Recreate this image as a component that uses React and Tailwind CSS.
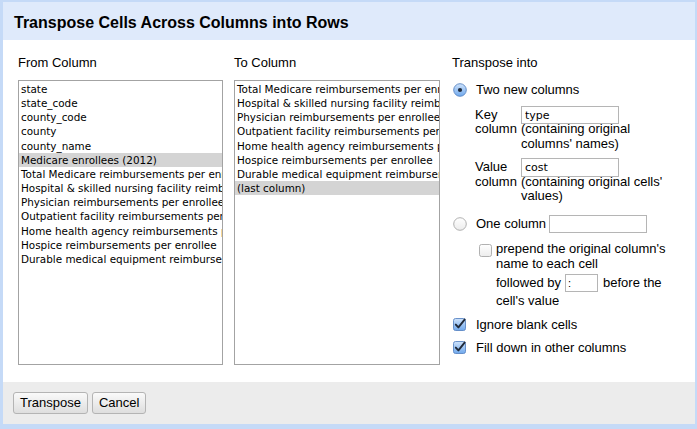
import React from "react";

const fromColumns = [
  "state",
  "state_code",
  "county_code",
  "county",
  "county_name",
  "Medicare enrollees (2012)",
  "Total Medicare reimbursements per enrollee",
  "Hospital & skilled nursing facility reimbursements",
  "Physician reimbursements per enrollee",
  "Outpatient facility reimbursements per enrollee",
  "Home health agency reimbursements per enrollee",
  "Hospice reimbursements per enrollee",
  "Durable medical equipment reimbursements",
];

const toColumns = [
  "Total Medicare reimbursements per enrollee",
  "Hospital & skilled nursing facility reimbursements",
  "Physician reimbursements per enrollee",
  "Outpatient facility reimbursements per enrollee",
  "Home health agency reimbursements per enrollee",
  "Hospice reimbursements per enrollee",
  "Durable medical equipment reimbursements",
  "(last column)",
];

const Radio = ({ checked }) => (
  <svg width="14" height="14" viewBox="0 0 14 14" className="shrink-0">
    <defs>
      <linearGradient id="rOn" x1="0" y1="0" x2="0" y2="1">
        <stop offset="0" stopColor="#cfe3fb" />
        <stop offset="1" stopColor="#6fa8ec" />
      </linearGradient>
      <linearGradient id="rOff" x1="0" y1="0" x2="0" y2="1">
        <stop offset="0" stopColor="#ffffff" />
        <stop offset="1" stopColor="#ececec" />
      </linearGradient>
    </defs>
    <circle
      cx="7"
      cy="7"
      r="6.3"
      fill={checked ? "url(#rOn)" : "url(#rOff)"}
      stroke={checked ? "#5b87c4" : "#a8a8a8"}
      strokeWidth="0.9"
    />
    {checked && <circle cx="7" cy="7" r="2.1" fill="#1f2a3a" />}
  </svg>
);

const Checkbox = ({ checked }) => (
  <svg width="13" height="13" viewBox="0 0 13 13" className="shrink-0">
    <defs>
      <linearGradient id="cOn" x1="0" y1="0" x2="0" y2="1">
        <stop offset="0" stopColor="#cfe3fb" />
        <stop offset="1" stopColor="#6fa8ec" />
      </linearGradient>
      <linearGradient id="cOff" x1="0" y1="0" x2="0" y2="1">
        <stop offset="0" stopColor="#ffffff" />
        <stop offset="1" stopColor="#ececec" />
      </linearGradient>
    </defs>
    <rect
      x="0.5"
      y="0.5"
      width="12"
      height="12"
      rx="2"
      fill={checked ? "url(#cOn)" : "url(#cOff)"}
      stroke={checked ? "#5b87c4" : "#a8a8a8"}
      strokeWidth="0.9"
    />
    {checked && (
      <path
        d="M2.8 6.6 L5.4 9.4 L11.6 1.6"
        fill="none"
        stroke="#1f2a3a"
        strokeWidth="1.9"
        strokeLinecap="round"
        strokeLinejoin="round"
      />
    )}
  </svg>
);

const ListBox = ({ items, selected }) => (
  <div className="w-full h-[285px] border border-[#a3a3a3] bg-white overflow-hidden pt-[1px]">
    {items.map((item) => (
      <div
        key={item}
        className={
          "whitespace-nowrap pl-[2px] h-[14.17px] leading-[14.17px] text-[10.4px] text-black " +
          (item === selected ? "bg-[#d4d4d4]" : "")
        }
      >
        {item}
      </div>
    ))}
  </div>
);

const App = () => {
  return (
    <div
      className="w-[697px] h-[429px] bg-[#c5daf7] pl-[3px] pt-[2px] pr-[2px] pb-[5px] text-black"
      style={{ fontFamily: '"Liberation Sans", Arial, sans-serif' }}
    >
      <div className="flex flex-col h-full bg-white">
        {/* Header */}
        <div className="h-[38px] bg-[#dfeafb] flex items-center pl-[11px] pt-[3px]">
          <h2 className="text-[16px] font-bold">
            Transpose Cells Across Columns into Rows
          </h2>
        </div>

        {/* Body */}
        <div className="flex-1 flex pl-[15px] pt-[15px]">
          {/* From Column */}
          <div className="w-[205px] flex flex-col">
            <div className="text-[13px] leading-[16px] mb-[9px]">From Column</div>
            <div style={{ fontFamily: '"DejaVu Sans", sans-serif' }}>
              <ListBox items={fromColumns} selected="Medicare enrollees (2012)" />
            </div>
          </div>

          {/* To Column */}
          <div className="w-[206px] ml-[11px] flex flex-col">
            <div className="text-[13px] leading-[16px] mb-[9px]">To Column</div>
            <div style={{ fontFamily: '"DejaVu Sans", sans-serif' }}>
              <ListBox items={toColumns} selected="(last column)" />
            </div>
          </div>

          {/* Transpose into */}
          <div className="ml-[12px] flex-1 flex flex-col text-[13px] leading-[16px]">
            <div>Transpose into</div>

            <div className="flex items-center gap-[9px] pl-[1px] mt-[11px] h-[16px]">
              <Radio checked />
              <span>Two new columns</span>
            </div>

            <div className="pl-[23px] leading-[14.5px]">
              {/* Key column */}
              <div className="flex mt-[9.5px]">
                <div className="w-[46px] shrink-0">
                  Key
                  <br />
                  column
                </div>
                <div className="flex flex-col">
                  <div className="h-[14.5px]">
                    <input
                      readOnly
                      value="type"
                      className="-mt-[1.5px] w-[98px] h-[18px] border border-[#b5b5b5] px-[3px] text-[11px] outline-none bg-white"
                      style={{ fontFamily: '"DejaVu Sans", sans-serif' }}
                    />
                  </div>
                  <div>
                    (containing original
                    <br />
                    columns' names)
                  </div>
                </div>
              </div>

              {/* Value column */}
              <div className="flex mt-[9px]">
                <div className="w-[46px] shrink-0">
                  Value
                  <br />
                  column
                </div>
                <div className="flex flex-col">
                  <div className="h-[14.5px]">
                    <input
                      readOnly
                      value="cost"
                      className="-mt-[2px] w-[98px] h-[19px] border border-[#b5b5b5] px-[3px] text-[11px] outline-none bg-white"
                      style={{ fontFamily: '"DejaVu Sans", sans-serif' }}
                    />
                  </div>
                  <div>
                    (containing original cells'
                    <br />
                    values)
                  </div>
                </div>
              </div>
            </div>

            <div className="flex items-center pl-[1px] mt-[11px] h-[18px]">
              <Radio />
              <span className="ml-[9px]">One column</span>
              <input
                readOnly
                className="ml-[3px] w-[98px] h-[18px] border border-[#b5b5b5] outline-none"
              />
            </div>

            <div className="pl-[27px] mt-[8px]">
              <div className="flex items-start gap-[4px]">
                <div className="pt-[3px]">
                  <Checkbox />
                </div>
                <div className="leading-[15px]">
                  prepend the original column's
                  <br />
                  name to each cell
                  <div className="flex items-center mt-[3px] h-[18px]">
                    <span>followed by</span>
                    <input
                      readOnly
                      value=":"
                      className="ml-[4px] w-[33px] h-[18px] border border-[#b5b5b5] px-[2px] text-[11px] outline-none"
                    />
                    <span className="ml-[5px]">before the</span>
                  </div>
                  <div className="mt-[1.5px]">cell's value</div>
                </div>
              </div>
            </div>

            <div className="flex items-center gap-[10px] pl-[1px] mt-[8.5px] h-[16px]">
              <Checkbox checked />
              <span>Ignore blank cells</span>
            </div>

            <div className="flex items-center gap-[10px] pl-[1px] mt-[7px] h-[16px]">
              <Checkbox checked />
              <span>Fill down in other columns</span>
            </div>
          </div>
        </div>

        {/* Footer */}
        <div className="h-[42px] bg-[#ececec] flex items-center pl-[10px] gap-[4px]">
          <button className="h-[22px] px-[6px] text-[13px] border border-[#b4b4b4] rounded-[3px] bg-gradient-to-b from-[#fafafa] to-[#dedede]">
            Transpose
          </button>
          <button className="h-[22px] px-[6px] text-[13px] border border-[#b4b4b4] rounded-[3px] bg-gradient-to-b from-[#fafafa] to-[#dedede]">
            Cancel
          </button>
        </div>
      </div>
    </div>
  );
};

export default App;
